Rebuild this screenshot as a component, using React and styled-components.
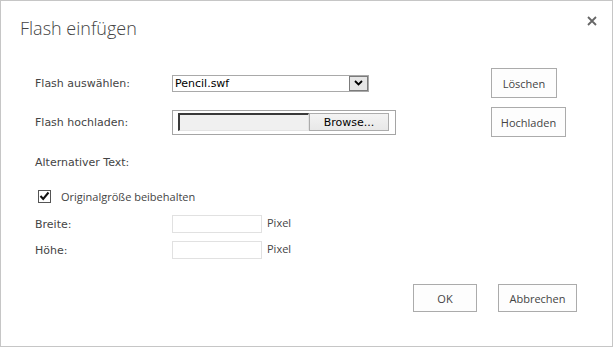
import React from 'react';
import styled, { createGlobalStyle } from 'styled-components';

const GlobalStyle = createGlobalStyle`
  body {
    margin: 0;
    background: #ffffff;
  }
  * {
    box-sizing: border-box;
  }
`;

const Dialog = styled.div`
  width: 613px;
  height: 347px;
  border: 1px solid #c6c6c6;
  background: #ffffff;
  display: flex;
  flex-direction: column;
  font-family: "DejaVu Sans", Verdana, sans-serif;
  font-size: 11px;
  color: #444444;
`;

const Header = styled.div`
  display: flex;
  justify-content: space-between;
  align-items: flex-start;
  height: 67px;
  padding: 14px 14px 0 19px;
`;

const Title = styled.h1`
  margin: 0;
  font-family: "Open Sans", "Segoe UI", sans-serif;
  font-weight: 300;
  font-size: 18px;
  line-height: 26px;
  color: #444444;
`;

const CloseButton = styled.button`
  width: 12px;
  height: 12px;
  margin-top: 0;
  padding: 0;
  border: 0;
  background: none;
  display: flex;
  align-items: center;
  justify-content: center;
  cursor: pointer;
`;

const Body = styled.div`
  padding-left: 34px;
  display: flex;
  flex-direction: column;
`;

const Row = styled.div`
  display: flex;
  align-items: center;
  height: ${p => p.$h}px;
  margin-top: ${p => p.$gap || 0}px;
`;

const Label = styled.label`
  width: 137px;
  flex-shrink: 0;
  color: #444444;
`;

const ControlCell = styled.div`
  width: 319px;
  display: flex;
  align-items: center;
`;

const Button = styled.button`
  width: ${p => p.$w}px;
  height: ${p => p.$h || 30}px;
  padding: 0;
  border: 1px solid #ababab;
  background: #fdfdfd;
  font-family: "Open Sans", "Segoe UI", sans-serif;
  font-size: 11px;
  color: #444444;
  cursor: pointer;
`;

const SelectBox = styled.div`
  width: 197px;
  height: 17px;
  border: 1px solid #a9a9a9;
  display: flex;
  align-items: center;
  padding-left: 2px;
  color: #000000;
  background: #ffffff;
`;

const SelectArrow = styled.span`
  margin-left: auto;
  width: 19px;
  height: 15px;
  border: 1px solid #7b7b7b;
  background: #e6e6e6;
  display: flex;
  align-items: center;
  justify-content: center;
`;

const FileBox = styled.div`
  width: 224px;
  height: 25px;
  border: 1px solid #a5a5a5;
  padding: 0 6px 0 5px;
  display: flex;
  align-items: center;
`;

const FileField = styled.span`
  width: 131px;
  height: 18px;
  border-top: 2px solid #3a3a3a;
  border-left: 2px solid #3a3a3a;
  border-right: 1px solid #e3e3e3;
  border-bottom: 1px solid #e3e3e3;
  background: #f0f0f0;
`;

const BrowseButton = styled.button`
  width: 80px;
  height: 18px;
  padding: 0;
  border: 1px solid #acacac;
  background: linear-gradient(#f3f3f3, #e8e8e8);
  font-family: "DejaVu Sans", Verdana, sans-serif;
  font-size: 11px;
  color: #000000;
`;

const CheckLabel = styled.label`
  display: flex;
  align-items: center;
  padding-left: 3px;
  font-family: "Open Sans", "Segoe UI", sans-serif;
  font-size: 11px;
  color: #444444;
`;

const CheckBox = styled.span`
  width: 13px;
  height: 13px;
  border: 1px solid #555555;
  background: #ffffff;
  margin-right: 10px;
  display: flex;
  align-items: center;
  justify-content: center;
`;

const TextInput = styled.input`
  width: 90px;
  height: 18px;
  border: 1px solid #e1e1e1;
  background: #ffffff;
  padding: 0 2px;
  outline: none;
`;

const Unit = styled.span`
  margin-left: 5px;
  margin-top: -4px;
  font-family: "Open Sans", "Segoe UI", sans-serif;
  font-size: 11px;
  color: #444444;
`;

const Footer = styled.div`
  display: flex;
  justify-content: flex-end;
  gap: 21px;
  padding-right: 35px;
  margin-top: 25px;
`;

export default function App() {
  return (
    <>
      <GlobalStyle />
      <Dialog>
        <Header>
          <Title>Flash einfügen</Title>
          <CloseButton aria-label="Schließen">
            <svg width="10" height="10" viewBox="0 0 10 10">
              <path d="M1 1L9 9M9 1L1 9" stroke="#666" strokeWidth="1.8" fill="none" />
            </svg>
          </CloseButton>
        </Header>
        <Body>
          <Row $h={30}>
            <Label>Flash auswählen:</Label>
            <ControlCell>
              <SelectBox>
                Pencil.swf
                <SelectArrow>
                  <svg width="9" height="6" viewBox="0 0 9 6">
                    <path d="M1 1L4.5 4.5L8 1" stroke="#000" strokeWidth="1.8" fill="none" />
                  </svg>
                </SelectArrow>
              </SelectBox>
            </ControlCell>
            <Button $w={66}>Löschen</Button>
          </Row>
          <Row $h={30} $gap={9}>
            <Label>Flash hochladen:</Label>
            <ControlCell>
              <FileBox>
                <FileField />
                <BrowseButton>Browse...</BrowseButton>
              </FileBox>
            </ControlCell>
            <Button $w={75}>Hochladen</Button>
          </Row>
          <Row $h={25} $gap={13}>
            <Label>Alternativer Text:</Label>
          </Row>
          <Row $h={24} $gap={9}>
            <CheckLabel>
              <CheckBox>
                <svg width="11" height="10" viewBox="0 0 11 10">
                  <path d="M1.5 5L4.2 8L9.5 1.5" stroke="#111" strokeWidth="2" fill="none" />
                </svg>
              </CheckBox>
              Originalgröße beibehalten
            </CheckLabel>
          </Row>
          <Row $h={18} $gap={7}>
            <Label>Breite:</Label>
            <TextInput />
            <Unit>Pixel</Unit>
          </Row>
          <Row $h={18} $gap={8}>
            <Label>Höhe:</Label>
            <TextInput />
            <Unit>Pixel</Unit>
          </Row>
        </Body>
        <Footer>
          <Button $w={64} $h={28}>OK</Button>
          <Button $w={79} $h={28}>Abbrechen</Button>
        </Footer>
      </Dialog>
    </>
  );
}
